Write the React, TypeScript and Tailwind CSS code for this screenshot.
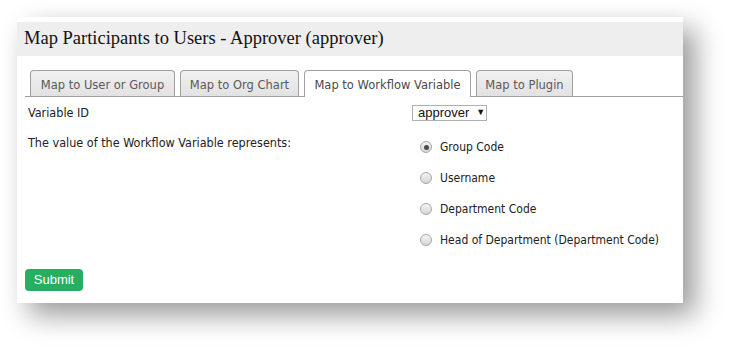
const tabs = [
  { label: "Map to User or Group", w: "w-[145px]" },
  { label: "Map to Org Chart", w: "w-[119px]" },
  { label: "Map to Workflow Variable", w: "w-[167px]" },
  { label: "Map to Plugin", w: "w-[97px]" },
];
const options = ["Group Code", "Username", "Department Code", "Head of Department (Department Code)"];

function Radio({ checked }: { checked: boolean }) {
  return (
    <span className="w-[12px] h-[12px] rounded-full border border-[#a6a6a6] bg-gradient-to-b from-[#f4f4f4] to-[#d6d6d6] flex items-center justify-center">
      {checked && <span className="w-[5px] h-[5px] rounded-full bg-[#4a4a4a]" />}
    </span>
  );
}

export default function App() {
  return (
    <div className="w-[731px] h-[352px] bg-white pl-[17px] pt-[17px]">
      <div className="w-[666px] h-[286px] bg-white pt-[5px] shadow-[12px_12px_26px_rgba(0,0,0,0.4)] flex flex-col">
        <div className="h-[34px] bg-[#eeeeee] px-[7px] flex items-center text-[18.5px] text-[#111] font-['Liberation_Serif',serif]">
          Map Participants to Users - Approver (approver)
        </div>

        <div className="pl-[8px] pt-[15px] flex-1 flex flex-col">
          <div className="flex items-end gap-[5px] pl-[5px] border-b border-[#a0a0a0] h-[26px] font-['DejaVu_Sans',sans-serif] text-[11.5px]">
            {tabs.map((t, i) => (
              <div
                key={t.label}
                className={
                  i === 2
                    ? `${t.w} h-[27px] -mb-px pt-[4px] flex items-center justify-center rounded-t-[4px] border border-b-0 border-[#a0a0a0] bg-white text-[#4a4a4a]`
                    : `${t.w} h-[26px] pt-[4px] flex items-center justify-center rounded-t-[4px] border border-b-0 border-[#a0a0a0] bg-gradient-to-b from-[#f0f0f0] to-[#e2e2e2] text-[#5a5a5a]`
                }
              >
                {t.label}
              </div>
            ))}
          </div>

          <div className="flex font-['DejaVu_Sans_Condensed','DejaVu_Sans',sans-serif] text-[#222]">
            <div className="w-[387px] pl-[3px] pt-[8px] text-[12.5px]">
              <div className="h-[16px] leading-[16px]">Variable ID</div>
              <div className="mt-[14px] leading-[16px]">The value of the Workflow Variable represents:</div>
            </div>
            <div className="pt-[8px] text-[12px]">
              <div className="w-[75px] h-[16px] border border-[#b0b0b0] flex items-center gap-[7px] pl-[5px] font-['Liberation_Sans',sans-serif] text-[13px] text-[#111]">
                <span>approver</span>
                <span className="text-[9px]">▼</span>
              </div>
              <div className="flex flex-col gap-[15px] pl-[8px] pt-[18px]">
                {options.map((o, i) => (
                  <div key={o} className="flex items-center gap-[8px] h-[16px]">
                    <Radio checked={i === 0} />
                    <span>{o}</span>
                  </div>
                ))}
              </div>
            </div>
          </div>

          <div className="mt-[21px]">
            <button className="w-[58px] h-[22px] rounded-[4px] bg-[#27ae60] text-white text-[13px] font-['Liberation_Sans',sans-serif] flex items-center justify-center">
              Submit
            </button>
          </div>
        </div>
      </div>
    </div>
  );
}
